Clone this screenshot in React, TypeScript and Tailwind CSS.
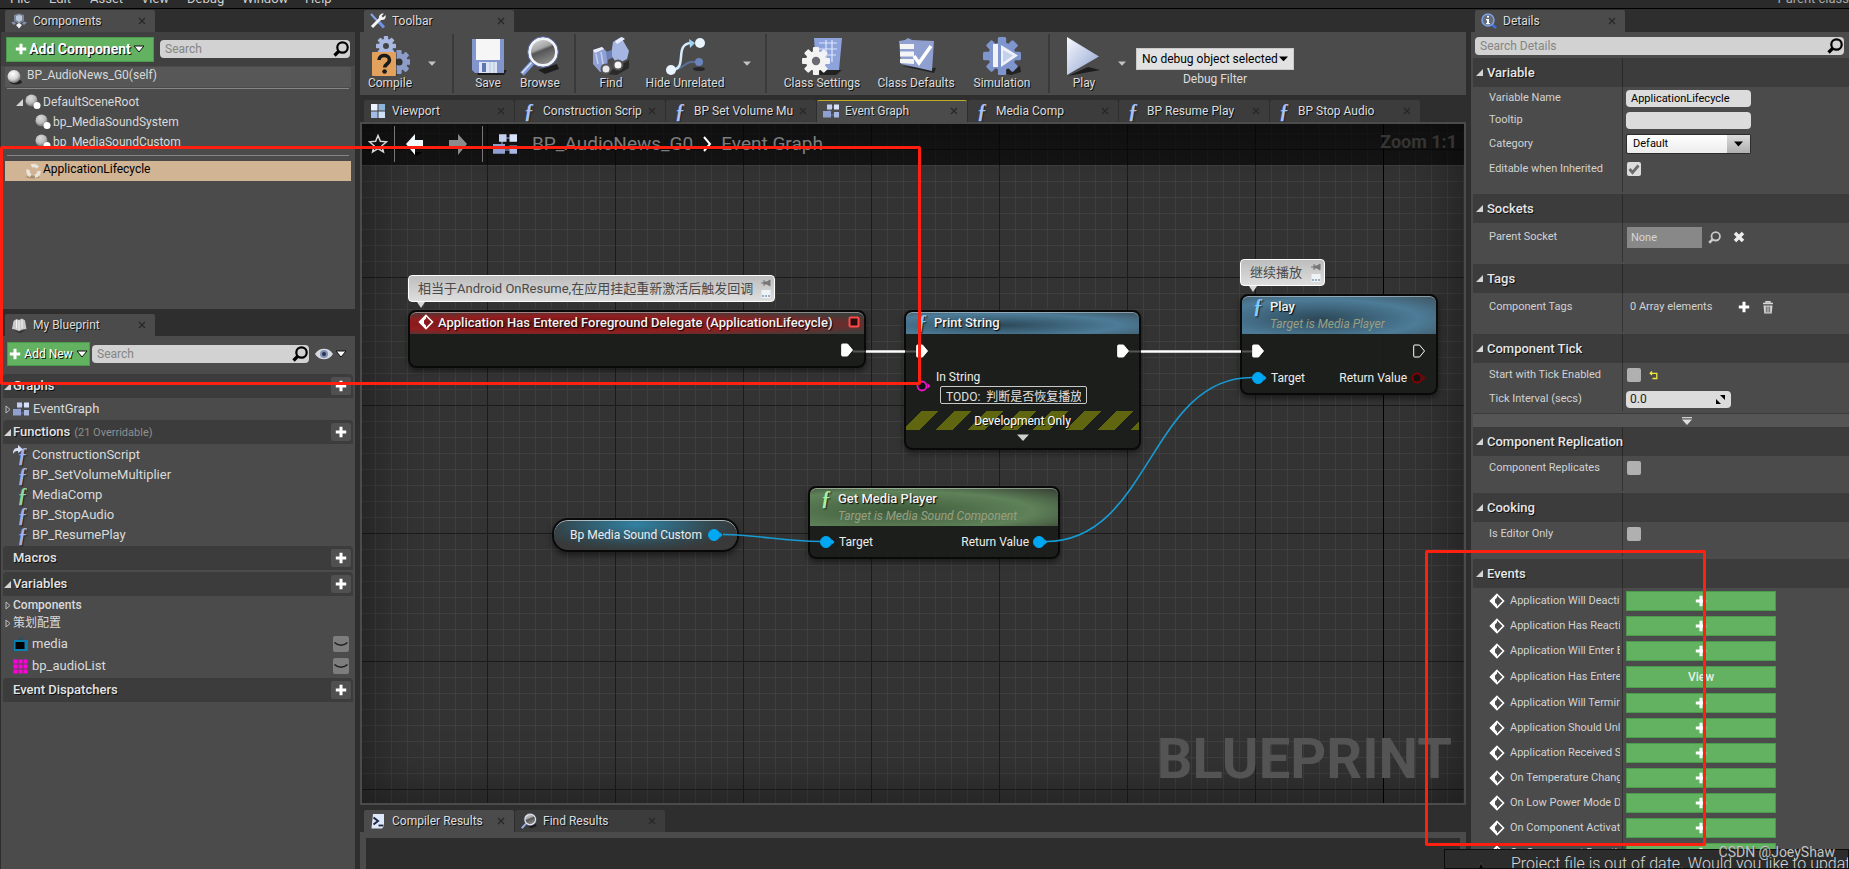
import React from "react";

const CJK = "font-['Roboto','Noto_Sans_CJK_SC',sans-serif]";
const SHADOW = "[text-shadow:1px_1px_0_#111]";

type Kids = { children?: React.ReactNode };

/* ---------- small drawings ---------- */

function Fn({ className = "" }: { className?: string }) {
  return (
    <span
      aria-hidden="true"
      className={`w-4 shrink-0 text-center font-['Liberation_Serif',serif] text-[20px] leading-4 font-bold italic [text-shadow:1px_1px_1px_#222] ${className}`}
    >
      ƒ
    </span>
  );
}

function Close() {
  return (
    <svg viewBox="0 0 8 8" className="size-2" aria-hidden="true">
      <path d="M1 1l6 6M7 1L1 7" stroke="#272727" strokeWidth="1.2" />
    </svg>
  );
}

function Plus({ className = "size-3" }: { className?: string }) {
  return (
    <svg viewBox="0 0 12 12" className={className} aria-hidden="true">
      <path d="M4.500 .8h3v3.700H11.200v3H7.500V11.200h-3V7.500H.8v-3h3.700z" fill="#fff" />
    </svg>
  );
}

function Caret({ fill = "#fff", className = "w-[9px]" }: { fill?: string; className?: string }) {
  return (
    <svg viewBox="0 0 10 6" className={`shrink-0 ${className}`} aria-hidden="true">
      <path d="M0 .5h10L5 6z" fill={fill} />
    </svg>
  );
}

function OutlinedCaret() {
  return (
    <svg viewBox="0 0 12 8" className="w-3 shrink-0" aria-hidden="true">
      <path d="M1 1h10L6 7z" fill="#fff" stroke="#111" />
    </svg>
  );
}

function Lens({ className = "size-4", color = "#000" }: { className?: string; color?: string }) {
  return (
    <svg viewBox="0 0 16 16" className={`shrink-0 ${className}`} aria-hidden="true">
      <circle cx="9.500" cy="6.500" r="5.200" fill="none" stroke={color} strokeWidth="2.200" />
      <path d="M6 10l-4.500 4.500" stroke={color} strokeWidth="3.200" />
    </svg>
  );
}

function OpenMark() {
  return (
    <svg viewBox="0 0 8 8" className="size-[7px] shrink-0" aria-hidden="true">
      <path d="M8 0v8H0z" fill="#d4d4d4" />
    </svg>
  );
}

function ClosedMark() {
  return (
    <svg viewBox="0 0 6 9" className="h-[9px] w-[6px] shrink-0" aria-hidden="true">
      <path d="M1 1v7l4-3.500z" fill="none" stroke="#bbb" />
    </svg>
  );
}

function Ball({ small = false }: { small?: boolean }) {
  return (
    <svg viewBox="0 0 16 16" className="size-4 shrink-0" aria-hidden="true">
      <defs>
        <radialGradient id="ball" cx=".4" cy=".3" r=".7">
          <stop offset="0" stopColor="#fff" />
          <stop offset=".6" stopColor="#d5d5d5" />
          <stop offset="1" stopColor="#777" />
        </radialGradient>
      </defs>
      {small ? (
        <>
          <circle cx="6.500" cy="6.500" r="6" fill="url(#ball)" opacity=".8" />
          <circle cx="12" cy="11.500" r="3.500" fill="#fff" />
        </>
      ) : (
        <>
          <ellipse cx="9" cy="13" rx="6" ry="2.500" fill="#222" />
          <circle cx="7" cy="7.500" r="6.500" fill="url(#ball)" />
        </>
      )}
    </svg>
  );
}

function RingIcon() {
  return (
    <svg viewBox="0 0 16 16" className="size-4 shrink-0" aria-hidden="true">
      <ellipse cx="8" cy="14" rx="7" ry="1.500" fill="#a98f72" />
      <circle cx="8.500" cy="8" r="5.500" fill="none" stroke="#e9e4dc" strokeWidth="3.500" strokeDasharray="7 4.500" />
    </svg>
  );
}

function GraphIcon({ className = "size-4" }: { className?: string }) {
  return (
    <svg viewBox="0 0 16 16" className={`shrink-0 ${className}`} aria-hidden="true">
      <path d="M6 4h8M6 12h8M6 4v8" stroke="#6b7ba8" strokeWidth="1" />
      <rect x="4" y="1.500" width="5" height="5" fill="#c3cff0" />
      <rect x="11" y="1.500" width="5" height="5" fill="#d8e2fa" />
      <rect x="0" y="8" width="8" height="6.500" fill="#8fa0d0" />
      <rect x="11" y="9" width="5" height="5.500" fill="#a9b8e2" />
    </svg>
  );
}

function ComponentsIcon() {
  return (
    <svg viewBox="0 0 16 16" className="size-4 shrink-0" aria-hidden="true">
      <path d="M3 2l5-1.500L13 2v6l-5 3-5-3z" fill="#7b8797" />
      <path d="M5 3l3-1 3 1v4L8 9 5 7z" fill="#b9c7dc" />
      <path d="M0 9.500l3-1 2 2-2 1.500zM16 9.500l-3-1-2 2 2 1.500z" fill="#8492ab" />
      <path d="M5 12l3-2 3 2-3 3.500z" fill="#eef2f8" />
    </svg>
  );
}

function BookIcon() {
  return (
    <svg viewBox="0 0 16 16" className="size-4 shrink-0" aria-hidden="true">
      <path d="M1 12l1.500-8 3-2L8 3l3-1.500 3 2L15.500 12l-4 .5L8 14l-4-1.500z" fill="#c9c9c9" />
      <path d="M5.500 3v8.500M8 3.500V13M11 3v8.500" stroke="#f3f3f3" />
      <path d="M1 12.500l7 2.500 7.500-2.500L9 16z" fill="#222" />
    </svg>
  );
}

function ToolsIcon() {
  return (
    <svg viewBox="0 0 16 16" className="size-4 shrink-0" aria-hidden="true">
      <path d="M1 1l6 6.500" stroke="#8aa6e8" strokeWidth="2" />
      <path d="M9 9l5 5.500" stroke="#6f93e6" strokeWidth="3" />
      <path d="M2 14L11 5" stroke="#f5f5f5" strokeWidth="3" />
      <path d="M14 .5L11.500 3l1.500 1.500L15.500 2c.8 3-1 5-3.500 5S8 4.500 9.500 2.500 12 .2 14 .5z" fill="#f5f5f5" />
    </svg>
  );
}

function ViewportIcon() {
  return (
    <svg viewBox="0 0 16 16" className="size-4 shrink-0" aria-hidden="true">
      <rect x="1" y="1" width="6.500" height="6.500" fill="#eef4ff" />
      <rect x="8.500" y="1" width="6.500" height="6.500" fill="#8fb4dc" />
      <rect x="1" y="8.500" width="6.500" height="6.500" fill="#9fbce6" />
      <rect x="8.500" y="8.500" width="6.500" height="6.500" fill="#cfdff7" />
    </svg>
  );
}

function InfoLens() {
  return (
    <svg viewBox="0 0 16 16" className="size-4 shrink-0" aria-hidden="true">
      <path d="M10.500 11l4.500 4" stroke="#3f6fe0" strokeWidth="2.500" />
      <circle cx="7" cy="7" r="6" fill="#626c7a" stroke="#7fa0e8" strokeWidth="1.500" />
      <rect x="6" y="2.800" width="2" height="1.800" fill="#fff" />
      <path d="M5 6h3v4h1v1.200H5V10h1V7.200H5z" fill="#fff" />
    </svg>
  );
}

function ConsoleIcon() {
  return (
    <svg viewBox="0 0 16 16" className="size-4 shrink-0" aria-hidden="true">
      <path d="M3 1h11v12l-2 2.500H1.500z" fill="#dfe8fb" />
      <path d="M3.500 4.500L8 8l-4.500 3.500" fill="none" stroke="#1c2740" strokeWidth="2" />
      <path d="M8.500 12.500h5" stroke="#1c2740" strokeWidth="1.800" />
    </svg>
  );
}

function GlassLens({ className = "size-4" }: { className?: string }) {
  return (
    <svg viewBox="0 0 40 40" className={`shrink-0 ${className}`} aria-hidden="true">
      <defs>
        <linearGradient id="glass" x1="0" y1="0" x2=".4" y2="1">
          <stop offset="0" stopColor="#e4e4e4" />
          <stop offset=".45" stopColor="#a5a5a5" />
          <stop offset=".55" stopColor="#555" />
          <stop offset="1" stopColor="#888" />
        </linearGradient>
      </defs>
      <path d="M18 34l19-6 2 5-14 5z" fill="#1d1d1d" />
      <path d="M13 26L2 38" stroke="#8299d6" strokeWidth="5" />
      <path d="M13 25L2 37" stroke="#dbe4fb" strokeWidth="1.500" />
      <circle cx="23" cy="16" r="13.500" fill="url(#glass)" stroke="#f2f4fa" strokeWidth="3" />
      <circle cx="23" cy="16" r="15.300" fill="none" stroke="#5c6fa6" strokeWidth="1" />
    </svg>
  );
}

function EventMark() {
  return (
    <svg viewBox="0 0 16 16" className="size-4 shrink-0" aria-hidden="true">
      <path d="M8 1.500L14.500 8 8 14.500 1.500 8z" fill="none" stroke="#fff" strokeWidth="1.600" />
      <path d="M8 1L1 8l7 7v-3.500L6 9.500v-3L8 4.500z" fill="#fff" />
    </svg>
  );
}

const TEETH = [0, 45, 90, 135, 180, 225, 270, 315];

function Gear({ cx, cy, r, fill, hole }: { cx: number; cy: number; r: number; fill: string; hole: string }) {
  return (
    <g>
      {TEETH.map((a) => (
        <rect key={a} x={cx - r * 0.22} y={cy - r} width={r * 0.44} height={r * 0.5} rx={r * 0.08} fill={fill} transform={`rotate(${a} ${cx} ${cy})`} />
      ))}
      <circle cx={cx} cy={cy} r={r * 0.72} fill={fill} />
      <circle cx={cx} cy={cy} r={r * 0.3} fill={hole} />
    </g>
  );
}

const big = "size-10";

const CompileIcon = () => (
  <svg viewBox="0 0 40 40" className={big} aria-hidden="true">
    <Gear cx={16} cy={10} r={10} fill="#a9b8e0" hole="#444" />
    <Gear cx={29} cy={26} r={12} fill="#8d9cc9" hole="#333" />
    <rect x="3" y="17" width="24" height="24" rx="1" fill="#1d1d1d" opacity=".5" />
    <rect x="2" y="16" width="24" height="24" rx="1" fill="#e2a15c" />
    <path d="M9 24c0-6 10.500-6 10.500 0 0 4-4.800 4-4.800 7.500" fill="none" stroke="#1b1b1b" strokeWidth="3.600" />
    <circle cx="14.600" cy="35.500" r="2.300" fill="#1b1b1b" />
  </svg>
);

const SaveIcon = () => (
  <svg viewBox="0 0 40 40" className={big} aria-hidden="true">
    <path d="M8 34h31l-3 5H10z" fill="#1d1d1d" />
    <path d="M4 3h32v34H7l-3-3z" fill="#8296cd" />
    <rect x="8" y="3" width="24" height="21" fill="#f6f6f6" />
    <rect x="11" y="26" width="18" height="11" fill="#dde4f2" />
    <rect x="14" y="27" width="4" height="9" fill="#6175b0" />
    <path d="M22 26v11M26 26v11" stroke="#b9c5e2" />
  </svg>
);

const FindIcon = () => (
  <svg viewBox="0 0 40 40" className={big} aria-hidden="true">
    <path d="M14 38l24-14v8l-12 7z" fill="#222" opacity=".8" />
    <path d="M2 14l9-3 6 6-1 17-7 2-7-8z" fill="#8fa1d4" />
    <path d="M22 6l8-5 8 14-2 8-10 5-6-9z" fill="#a6b6e2" />
    <path d="M15 16l6-2v8l-5 2z" fill="#6d80b8" />
    <path d="M2 14l9-3 2 2-9 4zM24 5l7-4 3 2-8 5z" fill="#e9eeff" />
    <path d="M5 18l2 10M10 16l2 12" stroke="#c6d1f2" strokeWidth="1.500" />
    <circle cx="15" cy="33" r="4.500" fill="#e8e8e8" stroke="#555" strokeWidth="2" />
    <circle cx="27" cy="29" r="4.500" fill="#f6f6f6" stroke="#555" strokeWidth="2" />
  </svg>
);

const HideIcon = () => (
  <svg viewBox="0 0 40 40" className={big} aria-hidden="true">
    <path d="M6 34c12 0 14-8 20-8h8" fill="none" stroke="#5a7098" strokeWidth="2" />
    <circle cx="34" cy="26" r="4" fill="#6b84bd" />
    <ellipse cx="34" cy="33" rx="6" ry="2" fill="#262626" />
    <path d="M6 34C24 34 8 8 26 7" fill="none" stroke="#d6ecfa" strokeWidth="2.500" />
    <path d="M24 3l6 4-5 5z" fill="#9fd3f2" />
    <circle cx="35" cy="7" r="5" fill="#e9f4ff" />
    <circle cx="6" cy="34" r="5" fill="#e9f4ff" />
  </svg>
);

const SettingsIcon = () => (
  <svg viewBox="0 0 40 40" className={big} aria-hidden="true">
    <path d="M14 34h26l-6 5H18z" fill="#222" />
    <path d="M12 2h28l-3 32H14z" fill="#8ea3dc" />
    <path d="M17 7h18M16 13h19M16 19h18M24 4v22M30 4v22" stroke="#dce6ff" strokeWidth="1.200" />
    <Gear cx={14} cy={25} r={14} fill="#f3f3f3" hole="#6a6a72" />
  </svg>
);

const DefaultsIcon = () => (
  <svg viewBox="0 0 40 40" className={big} aria-hidden="true">
    <path d="M6 30l32 7 2-5z" fill="#222" />
    <path d="M3 5l6-1 3-2 4 2 22 1-2 30L5 28z" fill="#8fa0d0" />
    <path d="M4 8h14v5H4zM4 15.500h14v5H4zM4 23h14v5l-14-1z" fill="#f4f4f4" />
    <path d="M18 20l5 7L35 10" fill="none" stroke="#fff" strokeWidth="3.500" />
  </svg>
);

const SimulationIcon = () => (
  <svg viewBox="0 0 40 40" className={big} aria-hidden="true">
    <path d="M14 36l24-6 1 6-10 3z" fill="#222" />
    <Gear cx={20} cy={20} r={19} fill="#7f95ce" hole="#7f95ce" />
    <rect x="11" y="8" width="5" height="23" fill="#f2f2f2" />
    <path d="M19 9l17 10.500L19 31z" fill="#eef1f8" />
    <path d="M21 14l10 5.500-10 7z" fill="#c5d2ee" />
  </svg>
);

const PlayIcon = () => (
  <svg viewBox="0 0 40 40" className={big} aria-hidden="true">
    <defs>
      <linearGradient id="play" x1="0" y1="0" x2="1" y2="1">
        <stop offset="0" stopColor="#f7f9ff" />
        <stop offset="1" stopColor="#8fa3cf" />
      </linearGradient>
    </defs>
    <path d="M4 40l32-6-12-3z" fill="#1d1d1d" />
    <path d="M3 1l32 19.500L3 39z" fill="url(#play)" />
  </svg>
);

/* ---------- panel parts ---------- */

function Tab({ icon, children, active = false, marked = false }: Kids & { icon: React.ReactNode; active?: boolean; marked?: boolean }) {
  return (
    <div
      className={`flex h-[22px] w-[150px] shrink-0 items-center rounded-t-xs border-t pr-[7px] pb-0.5 pl-1.5 ${marked ? "border-[#c0ae2a]" : "border-transparent"} ${active ? "bg-[#4b4b4b]" : "bg-[#3c3c3c]"}`}
    >
      {icon}
      <button className={`ml-1.5 min-w-0 flex-1 overflow-hidden text-left text-xs whitespace-nowrap text-[#dcdcdc] ${SHADOW}`}>{children}</button>
      <button aria-label="Close tab" className="p-1 pr-0.5">
        <Close />
      </button>
    </div>
  );
}

function SearchBox({ label, className = "" }: { label: string; className?: string }) {
  return (
    <label className={`flex h-[18px] items-center rounded-sm bg-[#d2d2d2] pr-px pl-[5px] ${className}`}>
      <input type="text" aria-label={label} placeholder={label} className="h-4 min-w-0 flex-1 bg-transparent text-xs text-black outline-none placeholder:text-[#858585]" />
      <Lens />
    </label>
  );
}

function Group({ title, note, open = false }: { title: string; note?: string; open?: boolean }) {
  return (
    <div className="mx-0.5 flex h-6 items-center rounded-t-sm bg-[#3c3c3c] pr-0.5">
      <span className="flex w-[10px] pl-px">{open && <OpenMark />}</span>
      <h3 className={`text-[13px] font-medium text-[#e4e4e4] ${SHADOW}`}>{title}</h3>
      {note && <span className="ml-1 pt-0.5 text-[11px] text-[#8f8f8f]">{note}</span>}
      <button aria-label={`Add to ${title}`} className="ml-auto flex h-[18px] w-5 items-center justify-center rounded-xs bg-[#505050]">
        <Plus />
      </button>
    </div>
  );
}

function FnRow({ children, tone = "text-[#9fb0e6]", arrow = false }: Kids & { tone?: string; arrow?: boolean }) {
  return (
    <li className="flex h-5 items-center pt-px pl-3">
      <span className="relative flex w-[19px] justify-center">
        {arrow && (
          <svg viewBox="0 0 10 10" className="absolute -top-0.5 left-0 size-2.5" aria-hidden="true">
            <path d="M0 9C0 4 2 3 5 3V0l5 4.500L5 8V6C3 6 1.500 6.500 0 9z" fill="#d5def5" />
          </svg>
        )}
        <Fn className={tone} />
      </span>
      {children}
    </li>
  );
}

function VarRow({ icon, children }: Kids & { icon: React.ReactNode }) {
  return (
    <li className="flex h-[22px] items-center pr-1.5 pl-3">
      <span className="flex w-[19px]">{icon}</span>
      {children}
      <button aria-label="Toggle visibility" className="ml-auto flex size-4 items-center justify-center rounded-xs bg-[#7d7d7d]">
        <svg viewBox="0 0 14 6" className="w-3.5" aria-hidden="true">
          <path d="M.5 1.500C4 5 10 5 13.500 1.500" fill="none" stroke="#1f1f1f" strokeWidth="1.500" />
        </svg>
      </button>
    </li>
  );
}

function LeftColumn() {
  return (
    <aside className="flex min-h-0 flex-col pl-px text-xs text-[#dadada]">
      <div className="pt-px pl-1">
        <Tab active icon={<ComponentsIcon />}>Components</Tab>
      </div>
      <section className="h-[277px] bg-[#4b4b4b]">
        <div className="flex h-[34px] items-center bg-[#404040] px-[5px]">
          <button className={`flex h-[25px] w-[148px] items-center justify-center gap-0.5 border border-[#4c9a4c] bg-[#62b262] text-sm font-bold whitespace-nowrap text-white ${SHADOW}`}>
            <Plus />
            Add Component
            <OutlinedCaret />
          </button>
          <SearchBox label="Search" className="ml-1.5 flex-1" />
        </div>
        <div className="mx-1 mt-px flex h-5 items-center bg-[#575757] pl-0.5">
          <Ball />
          <span className="ml-1 pb-1">BP_AudioNews_G0(self)</span>
        </div>
        <div className="mx-1.5 mt-px border-t border-[#868686]" />
        <ul className="pt-[3px]">
          <li className="flex h-5 items-center pl-[15px]">
            <OpenMark />
            <span className="ml-0.5 flex"><Ball small /></span>
            <span className="ml-0.5">DefaultSceneRoot</span>
          </li>
          <li className="flex h-5 items-center gap-0.5 pl-[34px]"><Ball small />bp_MediaSoundSystem</li>
          <li className="flex h-5 items-center gap-0.5 pl-[34px]"><Ball small />bp_MediaSoundCustom</li>
        </ul>
        <div className="mx-1.5 mt-[3px] border-t border-[#868686]" />
        <button className="mx-1 mt-[5px] flex h-5 w-[346px] items-center gap-0.5 bg-[#d0b494] pl-5 text-black">
          <RingIcon />
          <span className="pb-1">ApplicationLifecycle</span>
        </button>
      </section>
      <div className="pt-[5px] pl-1">
        <Tab active icon={<BookIcon />}>My Blueprint</Tab>
      </div>
      <section className="min-h-0 flex-1 overflow-hidden bg-[#4b4b4b]">
        <div className="flex h-9 items-center pr-2 pl-1.5">
          <button className={`flex h-6 w-[83px] items-center justify-center gap-[3px] border border-[#4c9a4c] bg-[#62b262] whitespace-nowrap text-white ${SHADOW}`}>
            <Plus />
            Add New
            <OutlinedCaret />
          </button>
          <SearchBox label="Search" className="ml-0.5 flex-1" />
          <button aria-label="View options" className="ml-1.5 flex items-center gap-0.5">
            <svg viewBox="0 0 18 12" className="w-[18px]" aria-hidden="true">
              <path d="M0 6c4-7 14-7 18 0-4 7-14 7-18 0z" fill="#d6d9e0" />
              <circle cx="9" cy="6" r="4" fill="#7f92b8" />
              <circle cx="9" cy="6" r="2" fill="#2b3347" />
            </svg>
            <OutlinedCaret />
          </button>
        </div>
        <div className="h-0.5" />
        <Group title="Graphs" open />
        <div className="flex h-[22px] items-center pl-1 text-[13px]">
          <ClosedMark />
          <span className="mr-1 ml-0.5 flex"><GraphIcon /></span>
          EventGraph
        </div>
        <Group title="Functions" note="(21 Overridable)" open />
        <ul className="h-[102px] text-[13px]">
          <FnRow arrow>ConstructionScript</FnRow>
          <FnRow>BP_SetVolumeMultiplier</FnRow>
          <FnRow tone="text-[#8fd6a4]">MediaComp</FnRow>
          <FnRow>BP_StopAudio</FnRow>
          <FnRow>BP_ResumePlay</FnRow>
        </ul>
        <Group title="Macros" />
        <div className="h-0.5" />
        <Group title="Variables" open />
        <div className="flex h-[18px] items-center gap-0.5 pl-1 font-medium">
          <ClosedMark />
          Components
        </div>
        <div className={`flex h-[18px] items-center gap-0.5 pl-1 ${CJK}`}>
          <ClosedMark />
          策划配置
        </div>
        <ul className="h-[46px] pt-px text-[13px]">
          <VarRow
            icon={
              <svg viewBox="0 0 16 16" className="size-4" aria-hidden="true">
                <path d="M5 1l3 3 2-3" fill="none" stroke="#14506e" />
                <rect x="1" y="4" width="14" height="11" fill="#0a7fb0" />
                <rect x="2.500" y="6" width="9" height="7" fill="#000" />
              </svg>
            }
          >
            media
          </VarRow>
          <VarRow
            icon={
              <svg viewBox="0 0 15 15" className="size-[15px]" aria-hidden="true">
                <path d="M.5.5h14v14H.5z" fill="#ff00dc" />
                <path d="M5 0v15M10 0v15M0 5h15M0 10h15" stroke="#4b4b4b" />
              </svg>
            }
          >
            bp_audioList
          </VarRow>
        </ul>
        <Group title="Event Dispatchers" />
      </section>
    </aside>
  );
}

/* ---------- toolbar ---------- */

function Tool({ icon, label, width }: { icon: React.ReactNode; label: string; width: string }) {
  return (
    <button className={`flex shrink-0 flex-col items-center pb-0.5 ${width}`}>
      {icon}
      <span className={`text-xs leading-[14px] whitespace-nowrap text-[#dcdcdc] ${SHADOW}`}>{label}</span>
    </button>
  );
}

function Drop({ label, className }: { label: string; className: string }) {
  return (
    <button aria-label={label} className={`flex shrink-0 justify-center ${className}`}>
      <Caret fill="#c4c4c4" className="w-2" />
    </button>
  );
}

const Rule = () => <div className="h-[59px] w-0.5 shrink-0 bg-[#3a3a3a]" />;

function Toolbar() {
  return (
    <div className="flex h-[63px] items-center overflow-hidden bg-[#4b4b4b]">
      <Tool icon={<CompileIcon />} label="Compile" width="w-[60px]" />
      <Drop label="Compile options" className="mr-2 w-6" />
      <Rule />
      <div className="ml-2 flex">
        <Tool icon={<SaveIcon />} label="Save" width="w-[52px]" />
        <Tool icon={<GlassLens className={big} />} label="Browse" width="w-[52px]" />
      </div>
      <div className="w-2" />
      <Rule />
      <div className="ml-2 flex items-center">
        <Tool icon={<FindIcon />} label="Find" width="w-[54px]" />
        <Tool icon={<HideIcon />} label="Hide Unrelated" width="w-[94px]" />
        <Drop label="Hide options" className="mr-1 w-[29px]" />
      </div>
      <Rule />
      <div className="ml-2 flex">
        <Tool icon={<SettingsIcon />} label="Class Settings" width="w-[94px]" />
        <Tool icon={<DefaultsIcon />} label="Class Defaults" width="w-[94px]" />
        <Tool icon={<SimulationIcon />} label="Simulation" width="w-[78px]" />
      </div>
      <div className="w-[7px]" />
      <Rule />
      <div className="ml-2 flex items-center">
        <Tool icon={<PlayIcon />} label="Play" width="w-[52px]" />
        <Drop label="Play options" className="w-6" />
      </div>
      <div className="ml-0.5 flex flex-col items-center gap-0.5 pt-1.5">
        <div className="relative flex items-center">
          <select id="debug-filter" className="h-[22px] w-[158px] appearance-none border border-[#c9c9c9] bg-[#e2e2e2] pl-[5px] text-xs text-black">
            <option>No debug object selected</option>
          </select>
          <span className="pointer-events-none absolute right-1.5"><Caret fill="#000" /></span>
        </div>
        <label htmlFor="debug-filter" className="text-xs leading-[14px] text-[#dcdcdc]">Debug Filter</label>
      </div>
    </div>
  );
}

/* ---------- graph ---------- */

function ExecPin({ hollow = false }: { hollow?: boolean }) {
  return (
    <svg viewBox="0 0 13 14" className="h-3.5 w-[13px] shrink-0" aria-hidden="true">
      <path d="M1.500 1h5l5 6-5 6h-5q-.8 0-.8-.8V1.800q0-.8.8-.8z" fill={hollow ? "none" : "#fff"} stroke="#fff" />
    </svg>
  );
}

function DataPin({ color, hollow = false }: { color: string; hollow?: boolean }) {
  return (
    <svg viewBox="0 0 15 12" className="h-3 w-[15px] shrink-0" aria-hidden="true">
      <circle cx="6" cy="6" r={hollow ? 4.5 : 5.5} fill={hollow ? "#111" : color} stroke={color} strokeWidth={hollow ? 1.800 : 1} />
      <path d="M11.500 3l3 3-3 3z" fill={color} />
    </svg>
  );
}

function Node({ place, children }: Kids & { place: string }) {
  return (
    <article className={`absolute flex flex-col overflow-hidden rounded-lg border-2 border-[#080908] bg-[#1b1d1a]/95 text-xs text-[#ededed] shadow-[0_3px_6px_rgba(0,0,0,.5)] ${place}`}>
      {children}
    </article>
  );
}

const BLUE = "bg-[radial-gradient(ellipse_at_40%_60%,#2c4858,#4d7c98_60%,#3d5360)]";

function Head({ tint, glyph, title, sub }: { tint: string; glyph: React.ReactNode; title: string; sub?: string }) {
  return (
    <header className={`flex shrink-0 items-start rounded-t-md pt-0.5 pl-2 shadow-[inset_0_1px_0_rgba(255,255,255,.4)] ${sub ? "h-[38px]" : "h-[22px]"} ${tint}`}>
      {glyph}
      <div className="ml-1 whitespace-nowrap">
        <h4 className="text-[13px] leading-[18px] font-medium text-[#f2f2f2] [text-shadow:1px_1px_1px_#000]">{title}</h4>
        {sub && <p className="text-xs leading-4 text-[#9a9f82] italic">{sub}</p>}
      </div>
    </header>
  );
}

function Bubble({ place, children }: Kids & { place: string }) {
  return (
    <div className={`absolute flex h-[27px] items-center justify-between rounded border border-white bg-linear-to-b from-[#bdbdbd] to-[#dedede] pr-[3px] pl-[9px] text-[13px] whitespace-nowrap text-[#4a4a4a] ${CJK} ${place}`}>
      {children}
      <svg viewBox="0 0 10 20" className="h-5 w-2.5" aria-hidden="true">
        <path d="M0 4h3M3 1v6M3 3h3l3-2v6l-3-2H3z" stroke="#777" fill="#777" />
        <rect x=".5" y="11" width="9" height="8" fill="#eef3f8" />
        <path d="M1 17h8" stroke="#8298ac" strokeWidth="1.500" strokeDasharray="2 1" />
      </svg>
      <svg viewBox="0 0 8 6" className="absolute top-[26px] left-2 h-1.5 w-2" aria-hidden="true">
        <path d="M0 0h8L4 6z" fill="#d8d8d8" />
      </svg>
    </div>
  );
}

function Graph() {
  return (
    <div className="relative min-h-0 flex-1 overflow-hidden border-2 border-[#4b4b4b] bg-[#333]">
      <svg className="absolute inset-0 h-full w-full" aria-hidden="true">
        <defs>
          <pattern id="minor" x="13" y="9" width="16" height="16" patternUnits="userSpaceOnUse">
            <path d="M.5 0v16M0 .5h16" stroke="#3f3f3f" />
          </pattern>
          <pattern id="major" x="125" y="25" width="128" height="128" patternUnits="userSpaceOnUse">
            <path d="M.5 0v128M0 .5h128" stroke="#1c1c1c" />
          </pattern>
        </defs>
        <rect width="100%" height="100%" fill="url(#minor)" />
        <rect width="100%" height="100%" fill="url(#major)" />
        <path d="M1021.500 0v800" stroke="#000" />
      </svg>
      <div className="absolute inset-0 shadow-[inset_0_0_60px_rgba(0,0,0,.5)]" />

      <div className="absolute inset-x-0 top-0 flex h-[41px] items-center overflow-hidden bg-black/60 pb-px pl-1.5 whitespace-nowrap">
        <button aria-label="Favourite">
          <svg viewBox="0 0 20 20" className="size-5" aria-hidden="true">
            <path d="M10 1.500l2.400 5.800 6.200.5-4.700 4 1.500 6.200-5.400-3.300L4.600 18l1.500-6.200-4.700-4 6.200-.5z" fill="none" stroke="#d8d8d8" strokeWidth="1.500" />
          </svg>
        </button>
        <span className="ml-1.5 h-9 w-px bg-[#777]" />
        <button aria-label="Back" className="ml-2.5">
          <svg viewBox="0 0 20 24" className="h-6 w-5" aria-hidden="true">
            <path d="M4 20l8 4 5-4z" fill="#000" />
            <path d="M1 12L10 2v6h8v9h-8v6z" fill="#f2fbfb" />
          </svg>
        </button>
        <button aria-label="Forward" className="ml-[23px]">
          <svg viewBox="0 0 20 24" className="h-6 w-5" aria-hidden="true">
            <path d="M19 12L10 2v6H1v9h9v6z" fill="#8b8b8b" />
          </svg>
        </button>
        <span className="ml-3.5 h-9 w-px bg-[#777]" />
        <span className="ml-2.5 flex"><GraphIcon className="size-6" /></span>
        <nav aria-label="Breadcrumb" className="ml-[15px] flex items-center gap-[9px] text-[19px] text-[#7d7d7d]">
          <a href="#blueprint">BP_AudioNews_G0</a>
          <svg viewBox="0 0 10 16" className="h-4 w-2.5" aria-hidden="true">
            <path d="M2 1l6 7-6 7" fill="none" stroke="#fff" strokeWidth="2" />
          </svg>
          <a href="#graph">Event Graph</a>
        </nav>
        <span className="mr-[7px] ml-auto pb-1 text-lg font-bold text-[#353535]">Zoom 1:1</span>
      </div>

      <p className="absolute right-3 bottom-1 text-[56px] leading-[80px] font-bold text-[#545454]">BLUEPRINT</p>

      <Bubble place="top-[151px] left-[46px] w-[367px]">相当于Android OnResume,在应用挂起重新激活后触发回调</Bubble>
      <Bubble place="top-[135px] left-[878px] w-[85px]">继续播放</Bubble>

      <Node place="top-[186px] left-[46px] h-[58px] w-[458px]">
        <div className="relative">
          <Head tint="bg-[radial-gradient(ellipse_at_35%_55%,#5e1012,#931d1f_45%,#3c3e3b_85%)]" glyph={<EventMark />} title="Application Has Entered Foreground Delegate (ApplicationLifecycle)" />
          <svg viewBox="0 0 12 12" className="absolute top-1 right-1 size-3" aria-hidden="true">
            <rect x="1.500" y="1.500" width="9" height="9" rx="1" fill="#2a0c0c" stroke="#ff4a4a" strokeWidth="2" />
          </svg>
        </div>
        <div className="flex h-[34px] items-center justify-end pr-2.5"><ExecPin /></div>
      </Node>

      <Node place="top-[186px] left-[542px] h-[140px] w-[237px]">
        <Head tint={BLUE} glyph={<Fn className="text-[#7ecbff]" />} title="Print String" />
        <div className="flex h-[34px] items-center justify-between pr-[9px] pl-2.5">
          <ExecPin />
          <ExecPin />
        </div>
        <div className="flex h-[43px] items-start pl-2.5">
          <span className="mt-3 flex"><DataPin color="#e815c6" hollow /></span>
          <div className="ml-[5px]">
            <label htmlFor="in-string" className="block leading-[18px]">In String</label>
            <input
              id="in-string"
              type="text"
              defaultValue="TODO:  判断是否恢复播放"
              className={`ml-1 block h-[18px] w-[147px] rounded-xs border border-[#c8c8c8] bg-transparent px-[5px] text-xs text-[#e0e0e0] ${CJK}`}
            />
          </div>
        </div>
        <p className={`flex h-[19px] shrink-0 items-center justify-center bg-[repeating-linear-gradient(135deg,#1c1e1b_0_11px,#60650f_11px_23px)] text-white ${SHADOW}`}>Development Only</p>
        <button aria-label="Show advanced pins" className="mt-[3px] self-center">
          <Caret fill="#d0d0d0" className="h-[9px] w-3" />
        </button>
      </Node>

      <Node place="top-[170px] left-[878px] h-[101px] w-[198px]">
        <Head tint={BLUE} glyph={<Fn className="text-[#7ecbff]" />} title="Play" sub="Target is Media Player" />
        <div className="flex h-[34px] items-center justify-between px-2.5">
          <ExecPin />
          <ExecPin hollow />
        </div>
        <div className="flex h-[19px] items-center px-2.5">
          <DataPin color="#00a8f3" />
          <span className="ml-1">Target</span>
          <span className="mr-1 ml-auto">Return Value</span>
          <DataPin color="#870000" hollow />
        </div>
      </Node>

      <Node place="top-[362px] left-[446px] h-[73px] w-[252px]">
        <Head tint="bg-[radial-gradient(ellipse_at_35%_60%,#3f5b3b,#5f8259_60%,#333c31)]" glyph={<Fn className="text-[#a5f0a0]" />} title="Get Media Player" sub="Target is Media Sound Component" />
        <div className="flex h-8 items-center px-2.5">
          <DataPin color="#00a8f3" />
          <span className="ml-1">Target</span>
          <span className="mr-1 ml-auto">Return Value</span>
          <DataPin color="#00a8f3" />
        </div>
      </Node>

      <div className="absolute top-[394px] left-[190px] flex h-[34px] w-[187px] items-center rounded-2xl border-2 border-[#080908] bg-[radial-gradient(ellipse_at_45%_15%,#3182a4,#33464d_55%,#383938_75%)] pl-4 text-xs whitespace-nowrap text-[#ededed] shadow-[0_3px_6px_rgba(0,0,0,.5),inset_0_1px_0_rgba(255,255,255,.6)]">
        Bp Media Sound Custom
        <span className="ml-1.5 flex"><DataPin color="#00a8f3" /></span>
      </div>

      <svg className="pointer-events-none absolute inset-0 h-full w-full" aria-hidden="true">
        <g fill="none">
          <path d="M504 227.500h39M779 227.500h100" stroke="#fff" strokeWidth="2.500" />
          <path d="M491 227.500h13M767 227.500h12M880 227.500h10M543 227.500h12" stroke="#fff" strokeWidth="2" opacity=".25" />
          <path d="M361 410.500C400 411 420 417.500 459 417.500M684 417.500C788 417.500 788 253.500 890 253.500" stroke="#179bd3" strokeWidth="1.600" />
        </g>
      </svg>
    </div>
  );
}

const DOCS: [string, "view" | "fn" | "graph"][] = [
  ["Viewport", "view"],
  ["Construction Scrip", "fn"],
  ["BP Set Volume Mu", "fn"],
  ["Event Graph", "graph"],
  ["Media Comp", "fn"],
  ["BP Resume Play", "fn"],
  ["BP Stop Audio", "fn"],
];

function CenterColumn() {
  return (
    <main className="flex min-h-0 min-w-0 flex-col">
      <div className="pt-px pl-1">
        <Tab active icon={<ToolsIcon />}>Toolbar</Tab>
      </div>
      <Toolbar />
      <div className="flex shrink-0 gap-px overflow-hidden pt-[5px] pl-1">
        {DOCS.map(([name, kind]) => (
          <Tab
            key={name}
            active={kind === "graph"}
            marked={kind === "graph"}
            icon={kind === "view" ? <ViewportIcon /> : kind === "graph" ? <GraphIcon /> : <Fn className="text-[#a9c0f5]" />}
          >
            {name}
          </Tab>
        ))}
      </div>
      <Graph />
      <div className="flex gap-px pt-[5px] pl-1">
        <Tab active icon={<ConsoleIcon />}>Compiler Results</Tab>
        <Tab icon={<GlassLens />}>Find Results</Tab>
      </div>
      <div className="h-[37px] shrink-0 border-x-6 border-t-6 border-[#4b4b4b] bg-[#2d2d2d]" />
    </main>
  );
}

/* ---------- details ---------- */

function Section({ title, children, tail = true }: Kids & { title: string; tail?: boolean }) {
  return (
    <section className={`ml-0.5 ${tail ? "mb-0.5" : ""}`}>
      <div className="flex h-[29px] bg-[#3c3c3c]">
        <h3 className={`flex w-[150px] shrink-0 items-center gap-1 border-r border-[#292929] pl-[3px] text-[13px] font-medium whitespace-nowrap text-[#e6e6e6] ${SHADOW}`}>
          <OpenMark />
          {title}
        </h3>
      </div>
      {children}
      {tail && <div className="h-[11px] w-[150px] border-r border-[#333]" />}
    </section>
  );
}

function Row({ label, id, height, children }: Kids & { label: string; id?: string; height: string }) {
  return (
    <div className={`flex ${height}`}>
      <label htmlFor={id} className="flex w-[150px] shrink-0 items-center border-r border-[#333] pt-px pl-4 text-[11px] whitespace-nowrap text-[#d2d2d2]">{label}</label>
      <div className="flex items-center pl-[3px]">{children}</div>
    </div>
  );
}

function Tick({ id, checked = false }: { id: string; checked?: boolean }) {
  return (
    <span className="relative ml-px flex">
      <input id={id} type="checkbox" defaultChecked={checked} className={`size-3.5 appearance-none rounded-xs ${checked ? "bg-[#dcdcdc]" : "bg-[#b0b0b0]"}`} />
      {checked && (
        <svg viewBox="0 0 14 14" className="pointer-events-none absolute inset-0" aria-hidden="true">
          <path d="M2.500 7l3 3.500L11.500 3.500" fill="none" stroke="#6b6b6b" strokeWidth="2.800" />
        </svg>
      )}
    </span>
  );
}

const EVENTS = [
  "Application Will Deactivate",
  "Application Has Reactivated",
  "Application Will Enter Background",
  "Application Has Entered Foreground",
  "Application Will Terminate",
  "Application Should Unload",
  "Application Received Startup",
  "On Temperature Change",
  "On Low Power Mode Delegate",
  "On Component Activated",
  "On Component Deactivated",
];

function Details() {
  return (
    <aside className="flex min-h-0 min-w-0 flex-col">
      <div className="pt-px pl-1">
        <Tab active icon={<InfoLens />}>Details</Tab>
      </div>
      <div className="min-h-0 flex-1 overflow-hidden bg-[#4b4b4b]">
        <div className="flex pt-[5px] pr-[5px] pb-[3px] pl-1">
          <SearchBox label="Search Details" className="flex-1" />
        </div>
        <Section title="Variable">
          <Row label="Variable Name" id="var-name" height="h-[22px]">
            <input id="var-name" type="text" defaultValue="ApplicationLifecycle" className="h-[17px] w-[125px] rounded-sm bg-[#dcdcdc] px-[5px] text-[11px] text-black" />
          </Row>
          <Row label="Tooltip" id="tooltip" height="h-[22px]">
            <input id="tooltip" type="text" className="h-[17px] w-[125px] rounded-sm bg-[#dcdcdc] px-[5px] text-[11px] text-black" />
          </Row>
          <Row label="Category" id="category" height="h-[26px]">
            <div className="relative flex">
              <select id="category" className="h-5 w-[125px] appearance-none rounded-xs border border-[#2c2c2c] bg-linear-to-b from-white to-[#ececec] pl-1.5 text-[11px] text-black">
                <option>Default</option>
              </select>
              <span className="pointer-events-none absolute inset-y-px right-px flex w-[23px] items-center justify-center bg-linear-to-b from-[#dcdcdc] to-[#b0b0b0]">
                <Caret fill="#000" />
              </span>
            </div>
          </Row>
          <Row label="Editable when Inherited" id="editable" height="h-6"><Tick id="editable" checked /></Row>
        </Section>
        <Section title="Sockets">
          <Row label="Parent Socket" id="socket" height="h-7">
            <input id="socket" type="text" readOnly value="None" className="ml-px h-[21px] w-[75px] bg-[#888] px-1 text-[11px] text-[#d6d6d6]" />
            <button aria-label="Browse sockets" className="ml-1.5"><Lens className="size-[13px]" color="#c9c9c9" /></button>
            <button aria-label="Clear socket" className="ml-3">
              <svg viewBox="0 0 12 12" className="size-3" aria-hidden="true"><path d="M2 2l8 8M10 2l-8 8" stroke="#eee" strokeWidth="3.500" /></svg>
            </button>
          </Row>
        </Section>
        <Section title="Tags">
          <Row label="Component Tags" height="h-7">
            <span className="ml-1 w-[86px] pt-px text-[11px] whitespace-nowrap text-[#d2d2d2]">0 Array elements</span>
            <button aria-label="Add element" className="ml-[22px]"><Plus /></button>
            <button aria-label="Remove all elements" className="ml-3">
              <svg viewBox="0 0 12 13" className="h-[13px] w-3" aria-hidden="true">
                <path d="M1 2.500h10M4 2V.8h4V2" stroke="#d6d6d6" strokeWidth="1.400" fill="none" />
                <path d="M1.500 4.500h9l-.8 8H2.300z" fill="#d6d6d6" />
                <path d="M4.300 5.500v6M6 5.500v6M7.700 5.500v6" stroke="#4b4b4b" strokeWidth=".8" />
              </svg>
            </button>
          </Row>
        </Section>
        <Section title="Component Tick" tail={false}>
          <Row label="Start with Tick Enabled" id="start-tick" height="h-6">
            <Tick id="start-tick" />
            <button aria-label="Reset to default" className="ml-2">
              <svg viewBox="0 0 9 9" className="size-[9px]" aria-hidden="true"><path d="M3 .5L1.200 2.300 3 4M1.200 2.300H7.800v5.200H3.500" fill="none" stroke="#f0e63c" strokeWidth="1.300" /></svg>
            </button>
          </Row>
          <Row label="Tick Interval (secs)" id="interval" height="h-6">
            <div className="relative flex items-center">
              <input id="interval" type="text" defaultValue="0.0" className="h-[17px] w-[105px] rounded-sm bg-[#dcdcdc] px-1 text-xs text-[#222]" />
              <svg viewBox="0 0 9 9" className="absolute right-1.5 size-[9px]" aria-hidden="true"><path d="M4 0h5v5zM0 4v5h5z" fill="#000" /></svg>
            </div>
          </Row>
          <button aria-label="Show advanced properties" className="mt-0.5 flex h-3.5 w-full items-center border-t border-[#3c3c3c] bg-[#555] pl-[209px]">
            <svg viewBox="0 0 10 8" className="h-2 w-2.5" aria-hidden="true"><path d="M0 .7h10" stroke="#ddd" strokeWidth="1.200" /><path d="M0 2.500h10L5 8z" fill="#ddd" /></svg>
          </button>
        </Section>
        <Section title="Component Replication">
          <Row label="Component Replicates" id="replicates" height="h-6"><Tick id="replicates" /></Row>
        </Section>
        <Section title="Cooking">
          <Row label="Is Editor Only" id="editor-only" height="h-6"><Tick id="editor-only" /></Row>
        </Section>
        <Section title="Events" tail={false}>
          <ul>
            {EVENTS.map((name, i) => {
              const view = i === 3;
              return (
                <li key={name} className={`flex ${view ? "h-[27px]" : "h-[25px]"}`}>
                  <span className="flex w-[150px] shrink-0 items-center border-r border-[#333] pt-px pr-0.5 pl-4">
                    <EventMark />
                    <span className="ml-[5px] min-w-0 flex-1 overflow-hidden text-[11px] whitespace-nowrap text-[#d2d2d2]">{name}</span>
                  </span>
                  <button
                    aria-label={view ? undefined : `Add ${name}`}
                    className={`mt-[3px] ml-[3px] flex w-[150px] items-center justify-center border border-[#4c9a4c] bg-[#62b262] text-xs font-medium text-[#e4f0e4] ${view ? "h-[22px]" : "h-5"}`}
                  >
                    {view ? "View" : <Plus />}
                  </button>
                </li>
              );
            })}
          </ul>
        </Section>
      </div>
    </aside>
  );
}

const MENU: [string, string][] = [
  ["File", "w-[39px]"],
  ["Edit", "w-[41px]"],
  ["Asset", "w-[51px]"],
  ["View", "w-[46px]"],
  ["Debug", "w-[55px]"],
  ["Window", "w-[63px]"],
  ["Help", "w-[40px]"],
];

export default function App() {
  return (
    <div className="relative flex h-screen flex-col overflow-hidden bg-[#2e2e2e] font-['Roboto',sans-serif]">
      <nav className="flex h-[9px] shrink-0 items-end overflow-hidden border-b border-black bg-[#2a2a2a] pb-px pl-2.5 text-[13px] leading-4 whitespace-nowrap text-[#cfcfcf]">
        {MENU.map(([name, width]) => (
          <button key={name} className={`shrink-0 text-left ${width}`}>{name}</button>
        ))}
        <span className="ml-auto text-[#a8a8a8]">Parent class</span>
      </nav>
      <div className="grid min-h-0 flex-1 grid-cols-[355px_minmax(0,1fr)_378px] grid-rows-[minmax(0,1fr)] gap-[5px]">
        <LeftColumn />
        <CenterColumn />
        <Details />
      </div>

      <div role="status" className="absolute right-0 bottom-0 flex h-5 w-[405px] items-start overflow-hidden border border-[#0c0c0c] bg-[#2c2c2c] pt-0.5 pl-[30px] text-base font-light whitespace-nowrap text-[#d8d8d8]">
        <svg viewBox="0 0 12 12" className="mt-2.5 size-3 shrink-0" aria-hidden="true"><path d="M6 1l5 11H1z" fill="#000" stroke="#555" strokeWidth=".5" /></svg>
        <span className="ml-6">Project file is out of date. Would you like to update it?</span>
      </div>
      <p className="absolute right-3.5 bottom-[7px] text-sm leading-5 text-[#c2c2c2] [text-shadow:1px_1px_1px_#333]">CSDN @JoeyShaw</p>
      <div className="pointer-events-none absolute top-[146px] left-0 h-[239px] w-[921px] rounded-xs border-3 border-[#ff2010]" />
      <div className="pointer-events-none absolute top-[550px] left-[1425px] h-[296px] w-[281px] rounded-xs border-3 border-[#ff2010]" />
    </div>
  );
}
